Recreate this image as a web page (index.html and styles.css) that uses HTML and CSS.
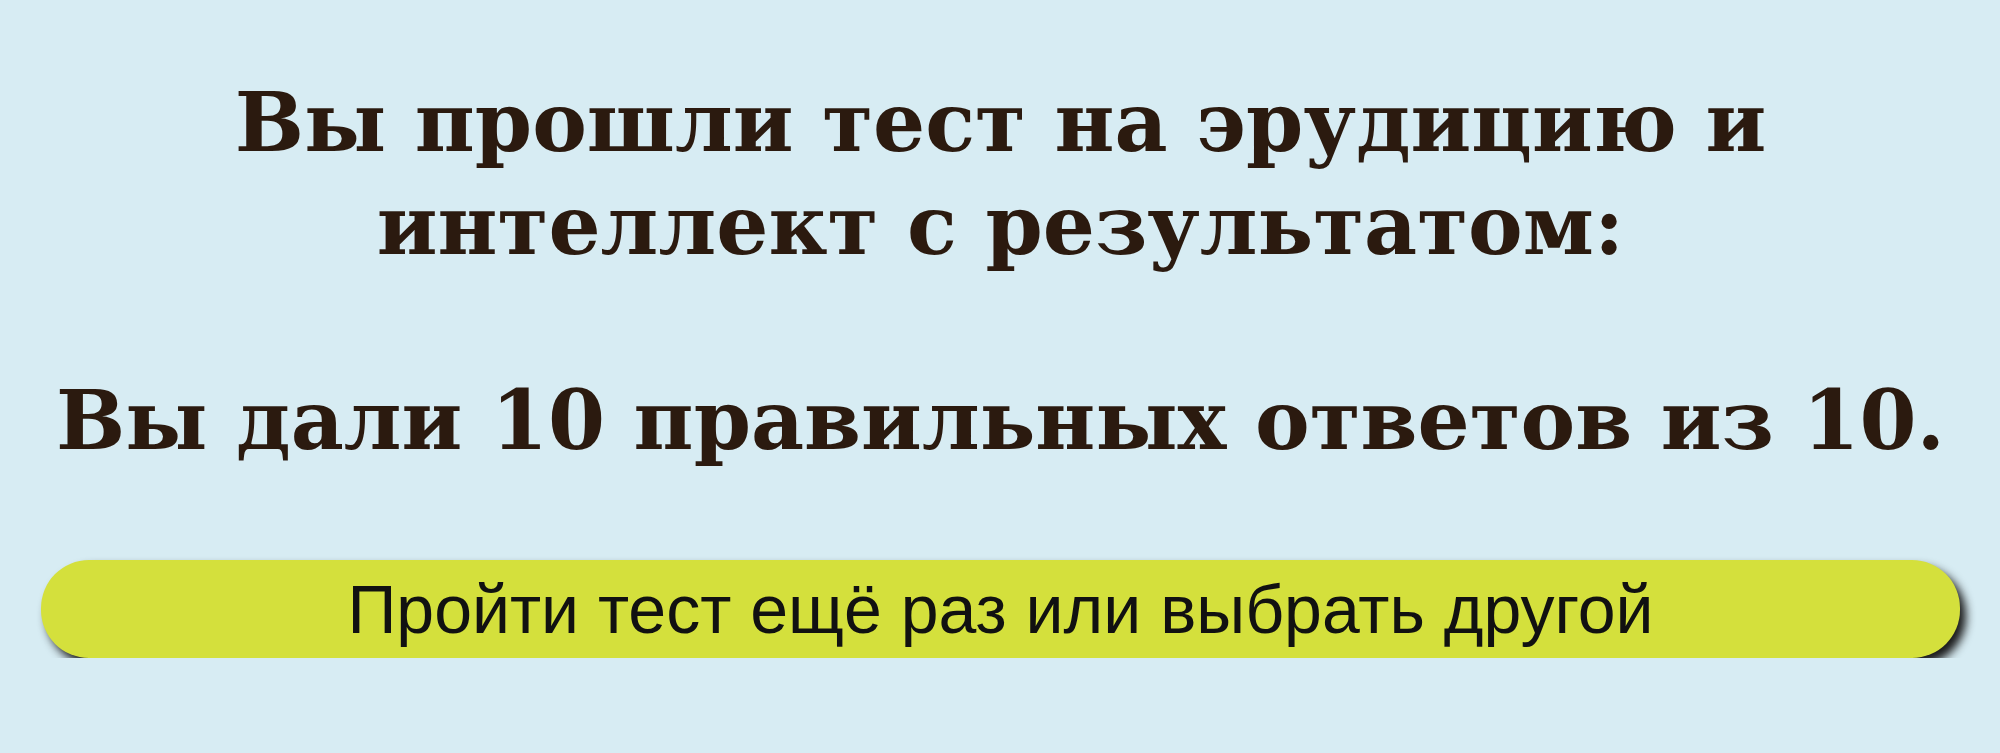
FILE: index.html
```html
<!DOCTYPE html>
<html lang="ru">
<head>
  <meta charset="UTF-8" />
  <meta name="viewport" content="width=device-width, initial-scale=1.0"/>
  <title>Результат теста</title>
  <link rel="stylesheet" href="styles.css">
</head>
<body>
  <div class="result">
    <h2 class="result-title">Вы прошли тест на эрудицию и интеллект с результатом:</h2>
    <p class="result-score">Вы дали 10 правильных ответов из 10.</p>
    <button class="retry-btn" onclick="location.reload()">Пройти тест ещё раз или выбрать другой</button>
  </div>
</body>
</html>
```

FILE: styles.css
```css
body {
  margin: 0;
  padding: 0;
  background: #d7ecf3;
  color: #2b1a0f;
}
.result {
  padding: 71px 40px 0 41px;
  text-align: center;
}
.result-title,
.result-score {
  font-family: "DejaVu Serif", Georgia, serif;
  font-weight: bold;
  font-size: 82px;
  line-height: 103px;
  margin: 0;
}
.result-title {
  padding: 0 150px;
}
.result-score {
  margin-top: 92px;
}
.retry-btn {
  display: block;
  width: 100%;
  margin-top: 88px;
  padding: 12px 20px;
  font-family: "Liberation Sans", Arial, sans-serif;
  font-size: 68px;
  line-height: 74px;
  color: #111;
  background: #d4e03c;
  border: none;
  border-radius: 48px;
  box-shadow: 6px 7px 10px #1a1a1a;
  cursor: pointer;
}
```
